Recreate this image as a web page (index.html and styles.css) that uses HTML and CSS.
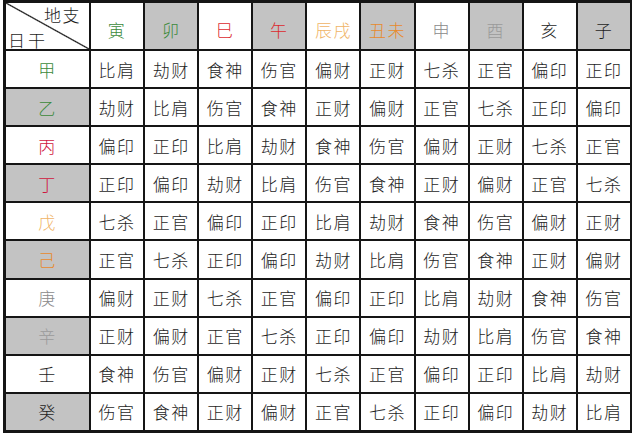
FILE: index.html
```html
<!DOCTYPE html>
<html lang="zh">
<head>
<meta charset="utf-8">
<title>十神表</title>
<link rel="stylesheet" href="styles.css">
</head>
<body>
<div class="table">
  <div class="corner"><span class="top">地支</span><span class="bottom">日干</span></div>
  <div class="hd green">寅</div>
  <div class="hd green gray">卯</div>
  <div class="hd red">巳</div>
  <div class="hd red gray">午</div>
  <div class="hd lorange">辰戌</div>
  <div class="hd orange gray">丑未</div>
  <div class="hd grey">申</div>
  <div class="hd lgrey gray">酉</div>
  <div class="hd black">亥</div>
  <div class="hd black gray">子</div>

  <div class="rl green">甲</div>
  <div>比肩</div><div>劫财</div><div>食神</div><div>伤官</div><div>偏财</div><div>正财</div><div>七杀</div><div>正官</div><div>偏印</div><div>正印</div>

  <div class="rl green gray">乙</div>
  <div>劫财</div><div>比肩</div><div>伤官</div><div>食神</div><div>正财</div><div>偏财</div><div>正官</div><div>七杀</div><div>正印</div><div>偏印</div>

  <div class="rl crimson">丙</div>
  <div>偏印</div><div>正印</div><div>比肩</div><div>劫财</div><div>食神</div><div>伤官</div><div>偏财</div><div>正财</div><div>七杀</div><div>正官</div>

  <div class="rl crimson gray">丁</div>
  <div>正印</div><div>偏印</div><div>劫财</div><div>比肩</div><div>伤官</div><div>食神</div><div>正财</div><div>偏财</div><div>正官</div><div>七杀</div>

  <div class="rl lorange">戊</div>
  <div>七杀</div><div>正官</div><div>偏印</div><div>正印</div><div>比肩</div><div>劫财</div><div>食神</div><div>伤官</div><div>偏财</div><div>正财</div>

  <div class="rl orange gray">己</div>
  <div>正官</div><div>七杀</div><div>正印</div><div>偏印</div><div>劫财</div><div>比肩</div><div>伤官</div><div>食神</div><div>正财</div><div>偏财</div>

  <div class="rl grey">庚</div>
  <div>偏财</div><div>正财</div><div>七杀</div><div>正官</div><div>偏印</div><div>正印</div><div>比肩</div><div>劫财</div><div>食神</div><div>伤官</div>

  <div class="rl lgrey gray">辛</div>
  <div>正财</div><div>偏财</div><div>正官</div><div>七杀</div><div>正印</div><div>偏印</div><div>劫财</div><div>比肩</div><div>伤官</div><div>食神</div>

  <div class="rl black">壬</div>
  <div>食神</div><div>伤官</div><div>偏财</div><div>正财</div><div>七杀</div><div>正官</div><div>偏印</div><div>正印</div><div>比肩</div><div>劫财</div>

  <div class="rl black gray">癸</div>
  <div>伤官</div><div>食神</div><div>正财</div><div>偏财</div><div>正官</div><div>七杀</div><div>正印</div><div>偏印</div><div>劫财</div><div>比肩</div>
</div>
</body>
</html>
```
FILE: styles.css
```css
html, body {
  margin: 0;
  padding: 0;
  background: #ffffff;
}
body {
  font-family: "Noto Sans CJK SC", "Noto Sans", sans-serif;
  font-weight: 300;
}
.table {
  margin-left: 3px;
  width: 629px;
  height: 433px;
  box-sizing: border-box;
  padding: 3px 2px 3px 3px;
  background: #151515;
  display: grid;
  grid-template-columns: 83px repeat(10, 1fr);
  grid-template-rows: 46px repeat(10, 1fr);
  gap: 2px;
}
.table > div {
  background: #ffffff;
  display: flex;
  align-items: center;
  justify-content: center;
  font-size: 17px;
  color: #1e1e1e;
  letter-spacing: 1.5px;
  line-height: 1;
}
.table > div.gray {
  background: #c3c3c3;
}
.table > .hd {
  padding-top: 6px;
  box-sizing: border-box;
}
.table > .corner {
  flex-direction: column;
  align-items: stretch;
  justify-content: space-between;
  padding: 3px 8px 1px 2px;
  box-sizing: border-box;
  background: linear-gradient(to top right, transparent calc(50% - 1.2px), #151515 50%, transparent calc(50% + 1.2px)), #ffffff;
}
.corner span {
  font-size: 17px;
  color: #1e1e1e;
}
.corner .top { align-self: flex-end; }
.corner .bottom { align-self: flex-start; letter-spacing: 3px; }

.green { color: #3b8a3b !important; }
.red { color: #dc2a2e !important; }
.crimson { color: #cf163e !important; }
.lorange { color: #f0b466 !important; }
.orange { color: #e88a2c !important; }
.grey { color: #8a8a8a !important; }
.lgrey { color: #9a9a9a !important; }
.black { color: #1e1e1e !important; }
```
